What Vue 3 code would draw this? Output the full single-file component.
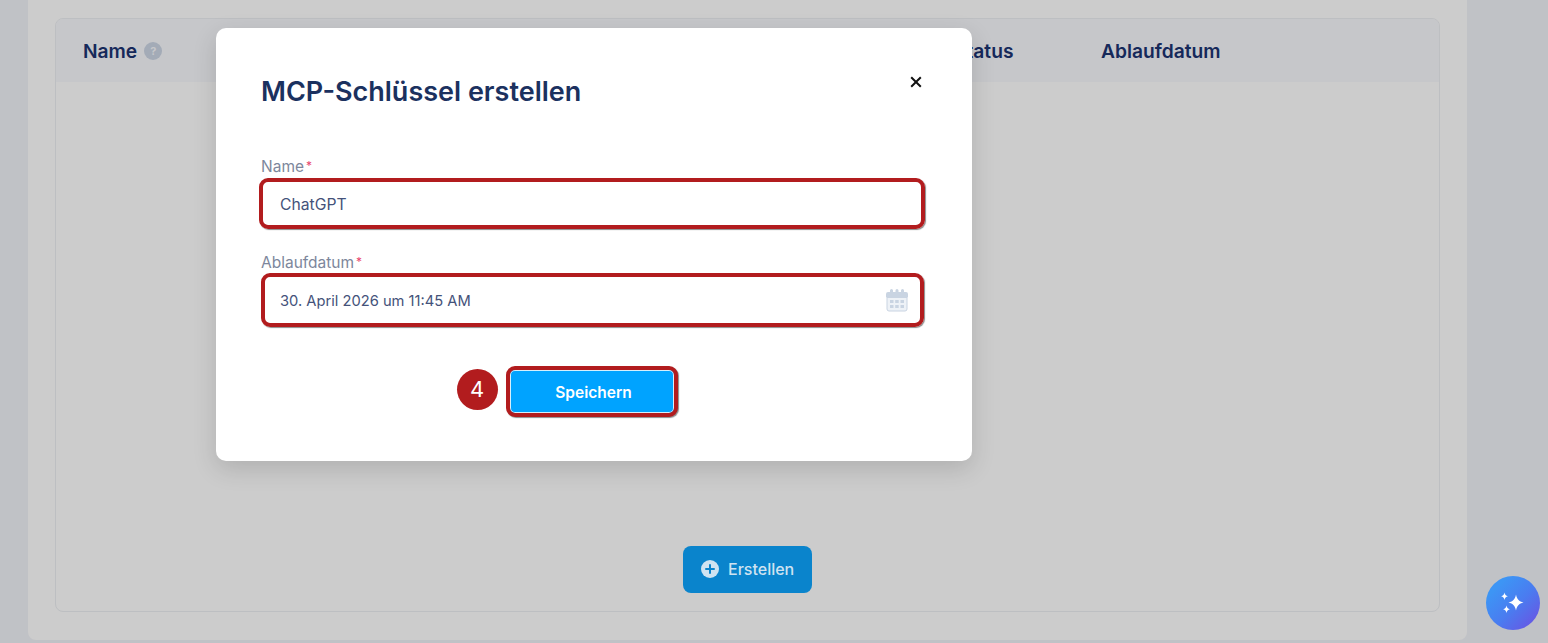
<template>
  <div class="page">
    <div class="panel">
      <div class="card">
        <div class="head">
          <div class="col-name">
            Name
            <span class="help">?</span>
          </div>
          <div class="col-status">Status</div>
          <div class="col-date">Ablaufdatum</div>
        </div>
        <div class="body">
          <button class="create">
            <svg width="18" height="18" viewBox="0 0 18 18">
              <circle cx="9" cy="9" r="9" fill="#cfe3f1" />
              <path d="M9 5v8M5 9h8" stroke="#0a84cc" stroke-width="2" stroke-linecap="round" />
            </svg>
            Erstellen
          </button>
        </div>
      </div>
    </div>

    <div class="modal">
      <div class="modal-top">
        <h2>MCP-Schlüssel erstellen</h2>
        <svg class="close" width="12" height="12" viewBox="0 0 12 12">
          <path d="M1.200 1.200l9.600 9.600M10.800 1.200l-9.600 9.600" stroke="#111" stroke-width="2" />
        </svg>
      </div>

      <label class="label">Name<span class="req">*</span></label>
      <div class="field field-name">ChatGPT</div>

      <label class="label label-date">Ablaufdatum<span class="req">*</span></label>
      <div class="field field-date">
        30. April 2026 um 11:45 AM
        <svg width="22" height="23" viewBox="0 0 22 23">
          <path d="M2 3h2V1.500a1.500 1.500 0 0 1 3 0V3h2.500V1.500a1.500 1.500 0 0 1 3 0V3H15V1.500a1.500 1.500 0 0 1 3 0V3h2a2 2 0 0 1 2 2v3.500H0V5a2 2 0 0 1 2-2z" fill="#c9d4e2" />
          <path d="M1 8.500h20V20a2 2 0 0 1-2 2H3a2 2 0 0 1-2-2z" fill="#eef2f7" stroke="#c9d4e2" />
          <path d="M4 11h3.500v3H4zM9.200 11h3.500v3H9.200zM14.500 11H18v3h-3.500zM4 16h3.500v3H4zM9.200 16h3.500v3H9.200zM14.500 16H18v3h-3.500z" fill="#c9d4e2" />
        </svg>
      </div>

      <div class="actions">
        <span class="step">4</span>
        <button class="save">Speichern</button>
      </div>
    </div>

    <div class="assistant">
      <svg width="28" height="26" viewBox="0 0 28 26">
        <path d="M17 4.500c.9 4.700 2.900 6.900 7.500 8-4.600 1.100-6.600 3.300-7.500 8-.9-4.700-2.900-6.900-7.500-8 4.600-1.100 6.600-3.300 7.500-8z" fill="#fff" />
        <path d="M5.500 2.500c.5 2.300 1.300 3.200 3.400 3.700-2.100.5-2.900 1.400-3.400 3.700-.5-2.300-1.300-3.200-3.400-3.700 2.100-.5 2.900-1.400 3.400-3.700z" fill="#fff" />
        <path d="M7.500 15.500c.5 2.300 1.300 3.200 3.400 3.700-2.100.5-2.900 1.400-3.400 3.700-.5-2.300-1.300-3.200-3.400-3.700 2.100-.5 2.900-1.400 3.400-3.700z" fill="#fff" />
      </svg>
    </div>
  </div>
</template>

<script setup>
</script>

<style>
html,
body {
  margin: 0;
  background: #c0c2c6;
}
</style>

<style scoped>
.page {
  position: relative;
  width: 1548px;
  height: 643px;
  overflow: hidden;
  padding: 0 81px 3px 28px;
  box-sizing: border-box;
  background: #c0c2c6;
  font-family: Inter, "Liberation Sans", sans-serif;
}

.panel {
  height: 100%;
  padding: 18px 27px 28px;
  box-sizing: border-box;
  background: #cccccc;
  border-radius: 0 0 8px 8px;
}

.card {
  display: flex;
  flex-direction: column;
  height: 100%;
  box-sizing: border-box;
  border: 1px solid #bdbfc2;
  border-radius: 8px;
  overflow: hidden;
}

.head {
  display: flex;
  align-items: center;
  height: 63px;
  flex-shrink: 0;
  padding-left: 27px;
  background: #c6c7ca;
  color: #16295a;
  font-size: 19.200px;
  font-weight: 600;
}

.col-name {
  display: flex;
  align-items: center;
  gap: 7px;
  width: 871px;
}

.help {
  display: flex;
  align-items: center;
  justify-content: center;
  width: 18px;
  height: 18px;
  border-radius: 50%;
  background: #a3abb7;
  color: #c6c7ca;
  font-size: 11px;
  font-weight: 700;
}

.col-status {
  width: 147px;
}

.body {
  flex: 1;
  display: flex;
  justify-content: center;
  align-items: flex-end;
  padding-bottom: 18px;
}

.create {
  display: flex;
  align-items: center;
  gap: 9px;
  width: 129px;
  height: 47px;
  padding: 0 0 2px 18px;
  border: none;
  border-radius: 8px;
  background: #0a84cc;
  color: #cfe3f1;
  font-family: inherit;
  font-size: 16px;
  font-weight: 500;
}

.modal {
  position: absolute;
  left: 216px;
  top: 28px;
  width: 756px;
  height: 433px;
  padding: 0 47px 0 45px;
  box-sizing: border-box;
  background: #fff;
  border-radius: 10px;
  box-shadow: 0 8px 24px rgba(0, 0, 0, 0.14);
}

.modal-top {
  display: flex;
  justify-content: space-between;
  align-items: flex-start;
  padding-top: 47px;
  padding-right: 3px;
}

h2 {
  margin: 0;
  color: #1b315f;
  font-size: 27px;
  line-height: 34px;
  font-weight: 600;
}

.close {
  margin-top: 1px;
}

.label {
  display: block;
  margin-top: 47px;
  color: #7d879c;
  font-size: 15.500px;
  line-height: 20px;
}

.label-date {
  margin-top: 23px;
}

.req {
  padding-left: 2px;
  color: #e8466e;
  font-size: 12px;
  vertical-align: 2px;
}

.field {
  display: flex;
  align-items: center;
  justify-content: space-between;
  box-sizing: border-box;
  padding: 0 12px 0 15px;
  border: 4px solid #b21c1e;
  border-radius: 9px;
  box-shadow: 1px 1px 1px #8c8c8c;
  color: #44527a;
}

.field-name {
  width: 666px;
  height: 51px;
  margin: 1px 0 0 -2px;
  padding-top: 2px;
  padding-left: 17px;
  font-size: 15.700px;
}

.field-date {
  width: 663px;
  height: 54px;
  margin: 0;
  padding-top: 2px;
  font-size: 14.700px;
}

.field-date svg {
  margin-top: -2px;
}

.actions {
  display: flex;
  align-items: center;
  justify-content: center;
  gap: 8px;
  margin-top: 39px;
  padding-right: 52px;
}

.step {
  display: flex;
  align-items: center;
  justify-content: center;
  width: 41px;
  height: 41px;
  margin-bottom: 5px;
  border-radius: 50%;
  background: #b21c1e;
  color: #fff;
  font-size: 22px;
}

.save {
  width: 172px;
  height: 51px;
  padding: 1px 0 0 4px;
  border: 4px solid #b21c1e;
  border-radius: 9px;
  background: #00a3ff;
  box-shadow: 1px 1px 1px #8c8c8c, inset 0 0 0 1px #d6effc;
  color: #fff;
  font-family: inherit;
  font-size: 15.500px;
  font-weight: 600;
}

.assistant {
  position: absolute;
  left: 1486px;
  top: 576px;
  display: flex;
  align-items: center;
  justify-content: center;
  width: 54px;
  height: 54px;
  border-radius: 50%;
  background: linear-gradient(135deg, #3d95f5 20%, #4a7cf0 55%, #6f4de0 100%);
}
</style>
